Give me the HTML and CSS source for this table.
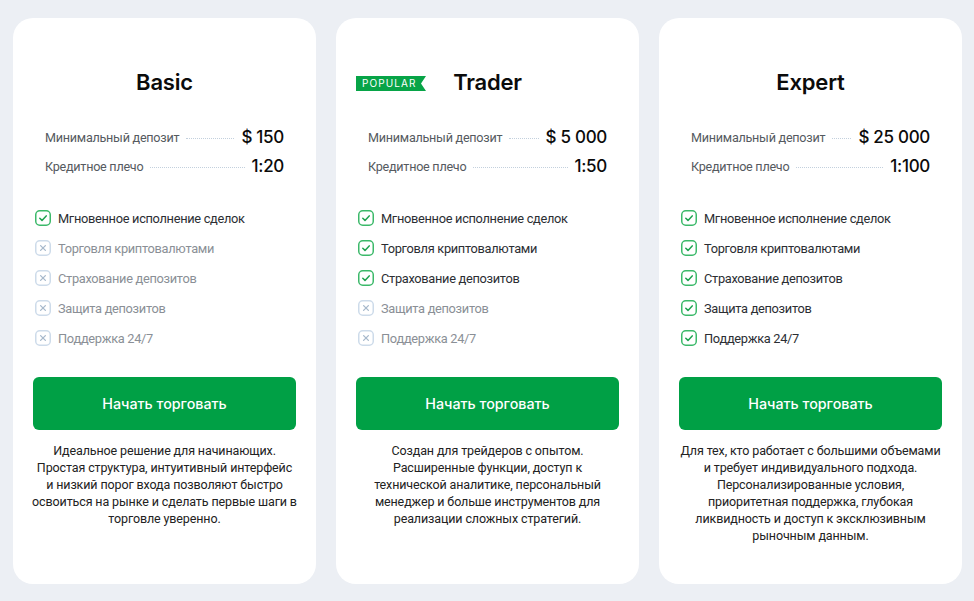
FILE: index.html
```html
<!DOCTYPE html>
<html lang="ru">
<head>
<meta charset="utf-8">
<link rel="stylesheet" href="styles.css">
</head>
<body>
<svg width="0" height="0" class="defs">
  <symbol id="yes" viewBox="0 0 16 16">
    <rect x="0.75" y="0.75" width="14.5" height="14.5" rx="4" fill="none" stroke="#3cb96a" stroke-width="1.5"/>
    <path d="M4.8 8.3 L7 10.4 L11.2 5.9" fill="none" stroke="#1fa24f" stroke-width="1.5" stroke-linecap="round" stroke-linejoin="round"/>
  </symbol>
  <symbol id="no" viewBox="0 0 16 16">
    <rect x="0.75" y="0.75" width="14.5" height="14.5" rx="4" fill="none" stroke="#cddbea" stroke-width="1.5"/>
    <path d="M5.6 5.6 L10.4 10.4 M10.4 5.6 L5.6 10.4" fill="none" stroke="#a7b9cc" stroke-width="1.3" stroke-linecap="round"/>
  </symbol>
</svg>
<main class="plans">
  <section class="card">
    <h2 class="title">Basic</h2>
    <div class="terms">
      <div class="term"><span class="label">Минимальный депозит</span><span class="dots"></span><span class="value">$ 150</span></div>
      <div class="term"><span class="label">Кредитное плечо</span><span class="dots"></span><span class="value">1:20</span></div>
    </div>
    <ul class="features">
      <li class="on"><svg class="ico"><use href="#yes"/></svg>Мгновенное исполнение сделок</li>
      <li class="off"><svg class="ico"><use href="#no"/></svg>Торговля криптовалютами</li>
      <li class="off"><svg class="ico"><use href="#no"/></svg>Страхование депозитов</li>
      <li class="off"><svg class="ico"><use href="#no"/></svg>Защита депозитов</li>
      <li class="off"><svg class="ico"><use href="#no"/></svg>Поддержка 24/7</li>
    </ul>
    <button class="cta">Начать торговать</button>
    <p class="desc desc--wide">Идеальное решение для начинающих. Простая структура, интуитивный интерфейс и&nbsp;низкий порог входа позволяют быстро освоиться на рынке и сделать первые шаги в торговле уверенно.</p>
  </section>
  <section class="card">
    <span class="badge">POPULAR</span>
    <h2 class="title">Trader</h2>
    <div class="terms">
      <div class="term"><span class="label">Минимальный депозит</span><span class="dots"></span><span class="value">$ 5 000</span></div>
      <div class="term"><span class="label">Кредитное плечо</span><span class="dots"></span><span class="value">1:50</span></div>
    </div>
    <ul class="features">
      <li class="on"><svg class="ico"><use href="#yes"/></svg>Мгновенное исполнение сделок</li>
      <li class="on"><svg class="ico"><use href="#yes"/></svg>Торговля криптовалютами</li>
      <li class="on"><svg class="ico"><use href="#yes"/></svg>Страхование депозитов</li>
      <li class="off"><svg class="ico"><use href="#no"/></svg>Защита депозитов</li>
      <li class="off"><svg class="ico"><use href="#no"/></svg>Поддержка 24/7</li>
    </ul>
    <button class="cta">Начать торговать</button>
    <p class="desc">Создан для трейдеров с опытом. Расширенные функции, доступ к технической аналитике, персональный менеджер и больше инструментов для реализации сложных стратегий.</p>
  </section>
  <section class="card">
    <h2 class="title">Expert</h2>
    <div class="terms">
      <div class="term"><span class="label">Минимальный депозит</span><span class="dots"></span><span class="value">$ 25 000</span></div>
      <div class="term"><span class="label">Кредитное плечо</span><span class="dots"></span><span class="value">1:100</span></div>
    </div>
    <ul class="features">
      <li class="on"><svg class="ico"><use href="#yes"/></svg>Мгновенное исполнение сделок</li>
      <li class="on"><svg class="ico"><use href="#yes"/></svg>Торговля криптовалютами</li>
      <li class="on"><svg class="ico"><use href="#yes"/></svg>Страхование депозитов</li>
      <li class="on"><svg class="ico"><use href="#yes"/></svg>Защита депозитов</li>
      <li class="on"><svg class="ico"><use href="#yes"/></svg>Поддержка 24/7</li>
    </ul>
    <button class="cta">Начать торговать</button>
    <p class="desc">Для тех, кто работает с большими объемами и требует индивидуального подхода. Персонализированные условия, приоритетная поддержка, глубокая ликвидность и доступ к эксклюзивным рыночным данным.</p>
  </section>
</main>
</body>
</html>
```
FILE: styles.css
```css
* { box-sizing: border-box; }
html, body { margin: 0; padding: 0; }
body {
  background: #eceff4;
  font-family: Roboto, "Noto Sans", sans-serif;
  color: #111;
  width: 974px;
  height: 601px;
  overflow: hidden;
}
.defs { position: absolute; width: 0; height: 0; }
.plans {
  display: grid;
  grid-template-columns: repeat(3, 303px);
  column-gap: 20px;
  padding: 18px 12px 0 13px;
}
.card {
  position: relative;
  background: #fff;
  border-radius: 20px;
  height: 566px;
  padding: 50px 20px 0 20px;
  display: flex;
  flex-direction: column;
}
.title {
  margin: 0;
  text-align: center;
  font-family: Inter, sans-serif;
  font-size: 22px;
  line-height: 28px;
  font-weight: 600;
  color: #0b0b0b;
  letter-spacing: -0.2px;
}
.badge {
  position: absolute;
  left: 20px;
  top: 58px;
  width: 70px;
  height: 15px;
  background: #07a447;
  color: #fff;
  font-family: Inter, sans-serif;
  font-size: 10px;
  line-height: 15px;
  letter-spacing: 1.1px;
  font-weight: 400;
  padding-left: 6px;
  clip-path: polygon(0 0, 100% 0, calc(100% - 5px) 50%, 100% 100%, 0 100%);
}
.terms {
  margin-top: 31px;
  padding: 0 12px;
  display: flex;
  flex-direction: column;
  gap: 9px;
}
.term {
  display: flex;
  align-items: center;
  height: 20px;
}
.label {
  font-size: 12.6px;
  letter-spacing: -0.25px;
  color: #555a60;
}
.dots {
  flex: 1;
  margin: 3px 7px 0 7px;
  border-bottom: 1px dotted #c3d0dd;
}
.value {
  font-family: Inter, sans-serif;
  font-size: 17px;
  font-weight: 500;
  letter-spacing: -0.3px;
  color: #0b0b0b;
}
.features {
  list-style: none;
  margin: 27px 0 0 0;
  padding: 0 0 0 2px;
}
.features li {
  display: flex;
  align-items: center;
  height: 30px;
  font-size: 12.8px;
  letter-spacing: -0.3px;
}
.features li.on { color: #2b2e33; }
.features li.off { color: #8a8f96; }
.ico {
  width: 16px;
  height: 16px;
  margin-right: 7px;
  flex: none;
}
.cta {
  margin-top: 24px;
  height: 53px;
  border: none;
  border-radius: 6px;
  background: #00a045;
  color: #fff;
  font-family: Inter, sans-serif;
  font-size: 14.3px;
  font-weight: 500;
  width: 100%;
}
.desc {
  margin: 12px 0 0 0;
  padding: 0;
  text-align: center;
  font-size: 12.5px;
  letter-spacing: -0.12px;
  line-height: 17px;
  color: #222;
}
.desc--wide {
  margin-left: -2px;
  margin-right: -2px;
}
```
